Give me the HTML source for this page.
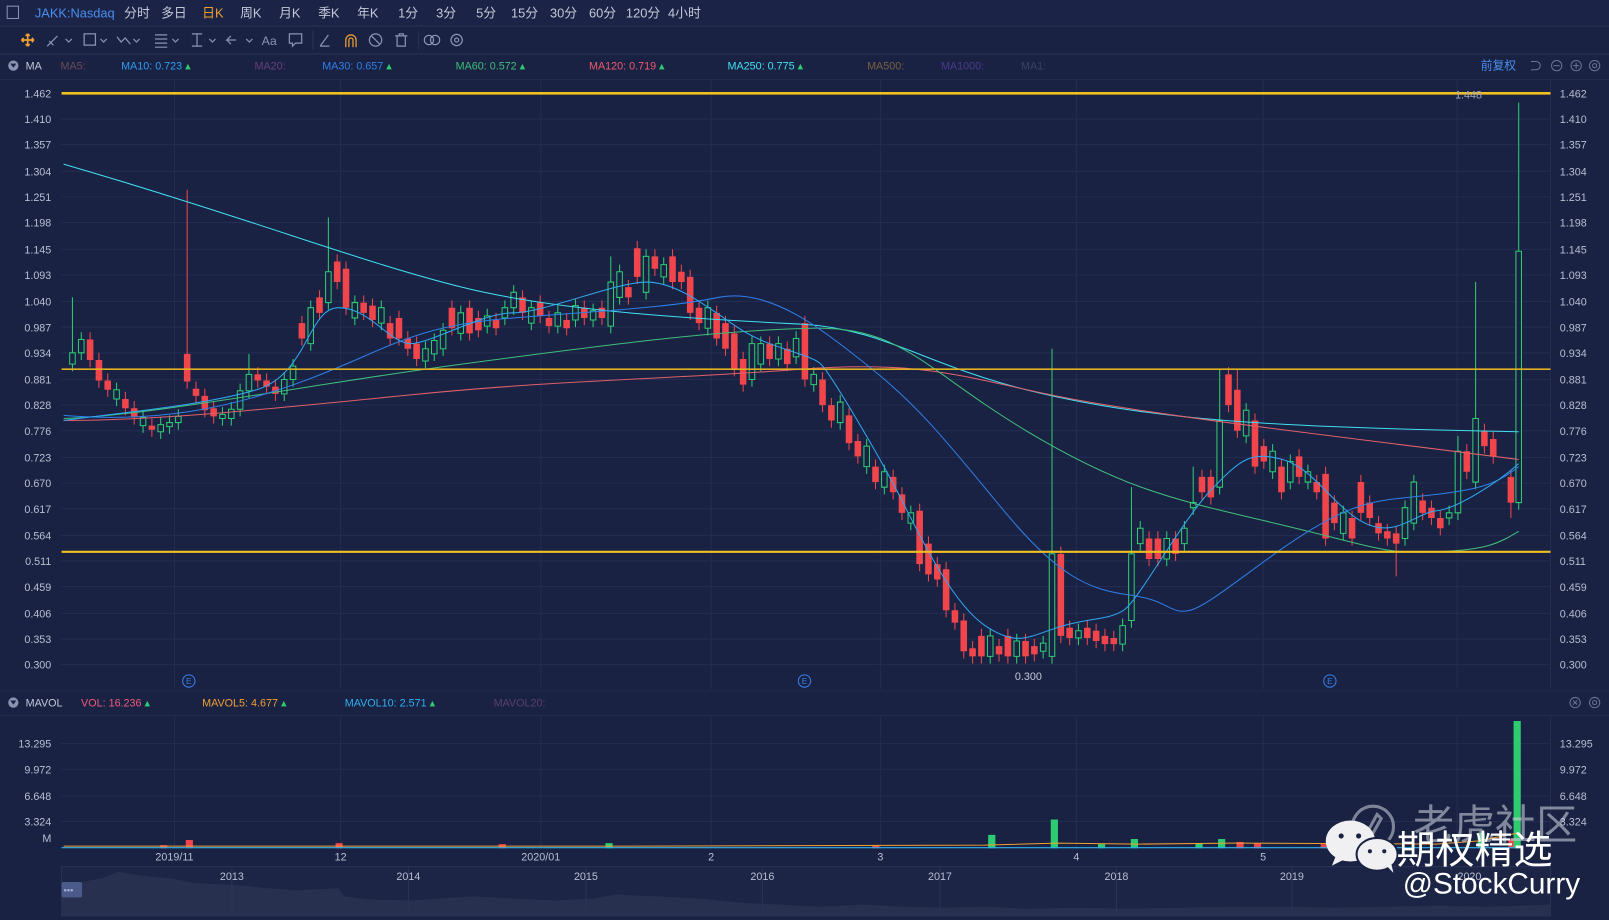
<!DOCTYPE html>
<html><head><meta charset="utf-8">
<style>
html,body{margin:0;padding:0;background:#1a2244;overflow:hidden}
svg{display:block}
text{font-family:"Liberation Sans","Noto Sans CJK SC",sans-serif}
</style></head>
<body>
<svg width="1609" height="920" viewBox="0 0 1568 897" preserveAspectRatio="none" xmlns="http://www.w3.org/2000/svg">
<rect width="1568" height="897" fill="#1a2244"/>
<rect x="0" y="0" width="1568" height="25" fill="#1b2346"/>
<line x1="0" y1="25.5" x2="1568" y2="25.5" stroke="#2a3458"/>
<line x1="0" y1="52.5" x2="1568" y2="52.5" stroke="#2a3458"/>
<rect x="7" y="6" width="11" height="12" fill="none" stroke="#8a94b0"/>
<g font-size="12.5" fill="#c3c9d9">
<text x="34" y="17" fill="#4a8ef0">JAKK:Nasdaq</text>
<text x="121" y="17">分时</text><text x="157" y="17">多日</text>
<text x="197" y="17" fill="#f0a030">日K</text><text x="234" y="17">周K</text>
<text x="272" y="17">月K</text><text x="310" y="17">季K</text><text x="348" y="17">年K</text>
<text x="388" y="17">1分</text><text x="425" y="17">3分</text><text x="464" y="17">5分</text>
<text x="498" y="17">15分</text><text x="536" y="17">30分</text><text x="574" y="17">60分</text>
<text x="610" y="17">120分</text><text x="651" y="17">4小时</text>
</g>
<g stroke="#8a94b0" fill="none" stroke-width="1.2">
<path d="M27 33v12M21 39h12M27 33l-2 2M27 33l2 2M27 45l-2-2M27 45l2-2M21 39l2-2M21 39l2 2M33 39l-2-2M33 39l-2 2" stroke="#f0a030" stroke-width="1.6"/>
<path d="M46 45l10-10M48 40l4 4"/><path d="M64 38l3 3 3-3"/>
<rect x="82" y="33" width="11" height="11"/><path d="M98 38l3 3 3-3"/>
<path d="M114 36l4 5 4-4 5 6"/><path d="M130 38l3 3 3-3"/>
<path d="M151 34h12M151 38h12M151 42h12M151 46h12"/><path d="M168 38l3 3 3-3"/>
<path d="M187 33h10M192 33v12M187 45h10"/><path d="M204 38l3 3 3-3"/>
<path d="M230 39h-9l4-4M221 39l4 4"/><path d="M240 38l3 3 3-3"/>
<path d="M282 33h12v9h-6l-3 3v-3h-3z"/>
<path d="M312 45l8-11M312 45h9"/>
<path d="M337 46v-7a5 5 0 0 1 10 0v7M340 46v-7a2 2 0 0 1 4 0v7" stroke="#f0a030"/>
<circle cx="366" cy="39" r="6"/><path d="M362 35l8 8"/>
<path d="M385 35h12M389 35v-2h4v2M387 35v10h8v-10"/>
<circle cx="418" cy="39" r="4.5"/><circle cx="424" cy="39" r="4.5"/>
<circle cx="445" cy="39" r="5.5"/><circle cx="445" cy="39" r="2"/>
</g>
<text x="255" y="44" font-size="12" fill="#8a94b0">Aa</text>
<line x1="305" y1="30" x2="305" y2="48" stroke="#2a3458"/>
<line x1="408" y1="30" x2="408" y2="48" stroke="#2a3458"/>
<circle cx="13" cy="64" r="5" fill="#8a94b0"/><path d="M10 62h6l-3 4z" fill="#1a2244"/>
<g font-size="10.5">
<text x="25" y="68" fill="#c3c9d9">MA</text>
<text x="59" y="68" fill="#6b4a5a">MA5:</text>
<text x="118" y="68" fill="#2f9cf0">MA10: 0.723 <tspan fill="#2ecc71">▴</tspan></text>
<text x="248" y="68" fill="#6a3f7a">MA20:</text>
<text x="314" y="68" fill="#2f7fe8">MA30: 0.657 <tspan fill="#2ecc71">▴</tspan></text>
<text x="444" y="68" fill="#3fbf7a">MA60: 0.572 <tspan fill="#2ecc71">▴</tspan></text>
<text x="574" y="68" fill="#f05a6a">MA120: 0.719 <tspan fill="#2ecc71">▴</tspan></text>
<text x="709" y="68" fill="#3fe0f0">MA250: 0.775 <tspan fill="#2ecc71">▴</tspan></text>
<text x="845" y="68" fill="#7a6040">MA500:</text>
<text x="917" y="68" fill="#4a3a8a">MA1000:</text>
<text x="995" y="68" fill="#3a4260">MA1:</text>
<text x="1443" y="68" fill="#4a8ef0" font-size="11.5">前复权</text>
</g>
<g stroke="#6a7490" fill="none" stroke-width="1">
<path d="M1492 60h5a4 4 0 0 1 0 8h-5"/>
<circle cx="1517" cy="64" r="5"/><path d="M1514 64h6"/>
<circle cx="1536" cy="64" r="5"/><path d="M1533 64h6M1536 61v6"/>
<circle cx="1554" cy="64" r="5"/><circle cx="1554" cy="64" r="2"/>
<circle cx="1535" cy="685" r="5"/><path d="M1533 683l4 4M1537 683l-4 4"/>
<circle cx="1554" cy="685" r="5"/><circle cx="1554" cy="685" r="2"/>
</g>
<g stroke="#232d52" stroke-width="1">
<path d="M60 91H1511M60 116H1511M60 141H1511M60 167H1511M60 192H1511M60 217H1511M60 243H1511M60 268H1511M60 294H1511M60 319H1511M60 344H1511M60 370H1511M60 395H1511M60 420H1511M60 446H1511M60 471H1511M60 496H1511M60 522H1511M60 547H1511M60 572H1511M60 598H1511M60 623H1511M60 648H1511"/>
<path d="M60 725H1511M60 750H1511M60 776H1511M60 801H1511"/>
<path d="M170 78V672M332 78V672M527 78V672M693 78V672M858 78V672M1049 78V672M1231 78V672M1420 78V672M1511 78V672"/>
<path d="M170 698V828M332 698V828M527 698V828M693 698V828M858 698V828M1049 698V828M1231 698V828M1420 698V828M1511 698V828"/>
</g>
<line x1="0" y1="77.5" x2="1568" y2="77.5" stroke="#222b4c"/>
<line x1="0" y1="673.5" x2="1568" y2="673.5" stroke="#222b4c"/>
<line x1="0" y1="697.5" x2="1568" y2="697.5" stroke="#222b4c"/>
<path fill="none" stroke="#f0454a" stroke-width="1" d="M87.8 324V358M96.4 344V378M105 364V387M122.2 382V405M130.8 391V414M148 408V426M182.4 185V379M191 372V393M199.6 379V407M208.2 391V413M251.2 358V378M259.8 364V384M268.4 370V391M294.2 308V337M311.4 283V312M328.6 248V282M337.2 255V307M354.4 288V312M363 291V319M380.2 308V337M388.8 303V337M397.4 323V347M406 328V357M440.4 293V327M457.6 293V332M466.2 303V329M483.4 305V327M509.2 283V312M526.4 288V315M535 303V325M552.2 305V327M569.4 293V317M586.6 293V317M612.4 273V297M621 235V277M638.2 243V269M655.4 243V282M664 258V282M672.6 263V312M681.2 293V322M698.4 298V337M707 308V347M715.6 318V367M724.2 343V382M750 328V357M767.2 333V362M784.4 308V377M801.6 363V402M810.2 388V417M827.4 398V439M836 423V452M853.2 448V477M870.4 458V487M879 475V507M896.2 491V557M904.8 523V567M913.4 543V572M922 548V602M930.6 588V614M939.2 598V642M947.8 625V647M956.4 613V647M973.6 623V645M982.2 613V647M999.4 618V647M1008 623V645M1033.8 533V627M1042.4 605V629M1059.6 605V629M1068.2 608V632M1076.8 613V635M1085.4 615V635M1119.8 518V552M1128.4 518V552M1145.6 518V547M1171.4 458V487M1180 458V492M1197.2 358V402M1205.8 360V427M1223 403V462M1231.6 428V457M1248.8 448V487M1266 438V472M1283.2 463V487M1291.8 455V532M1300.4 483V517M1317.6 498V532M1326.2 463V507M1334.8 483V512M1343.4 503V527M1352 511V532M1360.6 513V562M1386.4 481V507M1395 488V512M1403.6 498V522M1429.4 433V467M1446.6 413V442M1455.2 421V452M1472.4 458V505"/>
<path fill="#f0454a" d="M84.6 331h6.4v20h-6.4zM93.2 351h6.4v20h-6.4zM101.8 371h6.4v9h-6.4zM119 389h6.4v9h-6.4zM127.6 398h6.4v9h-6.4zM144.8 415h6.4v4h-6.4zM179.2 345h6.4v27h-6.4zM187.8 379h6.4v7h-6.4zM196.4 386h6.4v14h-6.4zM205 398h6.4v8h-6.4zM248 365h6.4v6h-6.4zM256.6 371h6.4v6h-6.4zM265.2 377h6.4v7h-6.4zM291 315h6.4v15h-6.4zM308.2 290h6.4v15h-6.4zM325.4 255h6.4v20h-6.4zM334 262h6.4v38h-6.4zM351.2 295h6.4v10h-6.4zM359.8 298h6.4v14h-6.4zM377 315h6.4v15h-6.4zM385.6 310h6.4v20h-6.4zM394.2 330h6.4v10h-6.4zM402.8 335h6.4v15h-6.4zM437.2 300h6.4v20h-6.4zM454.4 300h6.4v25h-6.4zM463 310h6.4v12h-6.4zM480.2 312h6.4v8h-6.4zM506 290h6.4v15h-6.4zM523.2 295h6.4v13h-6.4zM531.8 310h6.4v8h-6.4zM549 312h6.4v8h-6.4zM566.2 300h6.4v10h-6.4zM583.4 300h6.4v10h-6.4zM609.2 280h6.4v10h-6.4zM617.8 242h6.4v28h-6.4zM635 250h6.4v12h-6.4zM652.2 250h6.4v25h-6.4zM660.8 265h6.4v10h-6.4zM669.4 270h6.4v35h-6.4zM678 300h6.4v15h-6.4zM695.2 305h6.4v25h-6.4zM703.8 315h6.4v25h-6.4zM712.4 325h6.4v35h-6.4zM721 350h6.4v25h-6.4zM746.8 335h6.4v15h-6.4zM764 340h6.4v15h-6.4zM781.2 315h6.4v55h-6.4zM798.4 370h6.4v25h-6.4zM807 395h6.4v15h-6.4zM824.2 405h6.4v27h-6.4zM832.8 430h6.4v15h-6.4zM850 455h6.4v15h-6.4zM867.2 465h6.4v15h-6.4zM875.8 482h6.4v18h-6.4zM893 498h6.4v52h-6.4zM901.6 530h6.4v30h-6.4zM910.2 550h6.4v15h-6.4zM918.8 555h6.4v40h-6.4zM927.4 595h6.4v12h-6.4zM936 605h6.4v30h-6.4zM944.6 632h6.4v8h-6.4zM953.2 620h6.4v20h-6.4zM970.4 630h6.4v8h-6.4zM979 620h6.4v20h-6.4zM996.2 625h6.4v15h-6.4zM1004.8 630h6.4v8h-6.4zM1030.6 540h6.4v80h-6.4zM1039.2 612h6.4v10h-6.4zM1056.4 612h6.4v10h-6.4zM1065 615h6.4v10h-6.4zM1073.6 620h6.4v8h-6.4zM1082.2 622h6.4v6h-6.4zM1116.6 525h6.4v20h-6.4zM1125.2 525h6.4v20h-6.4zM1142.4 525h6.4v15h-6.4zM1168.2 465h6.4v15h-6.4zM1176.8 465h6.4v20h-6.4zM1194 365h6.4v30h-6.4zM1202.6 380h6.4v40h-6.4zM1219.8 410h6.4v45h-6.4zM1228.4 435h6.4v15h-6.4zM1245.6 455h6.4v25h-6.4zM1262.8 445h6.4v20h-6.4zM1280 470h6.4v10h-6.4zM1288.6 462h6.4v63h-6.4zM1297.2 490h6.4v20h-6.4zM1314.4 505h6.4v20h-6.4zM1323 470h6.4v30h-6.4zM1331.6 490h6.4v15h-6.4zM1340.2 510h6.4v10h-6.4zM1348.8 518h6.4v7h-6.4zM1357.4 520h6.4v10h-6.4zM1383.2 488h6.4v12h-6.4zM1391.8 495h6.4v10h-6.4zM1400.4 505h6.4v10h-6.4zM1426.2 440h6.4v20h-6.4zM1443.4 420h6.4v15h-6.4zM1452 428h6.4v17h-6.4zM1469.2 465h6.4v25h-6.4z"/>
<path fill="none" stroke="#2ecc71" stroke-width="1" d="M70.6 290V362M79.2 324V351M113.6 373V396M139.4 400V422M156.6 407V428M165.2 405V423M173.8 399V419M216.8 397V415M225.4 392V415M234 374V406M242.6 345V388M277 363V391M285.6 350V377M302.8 293V342M320 212V302M345.8 288V317M371.6 293V322M414.6 333V359M423.2 325V352M431.8 315V347M449 298V332M474.8 301V325M492 293V317M500.6 278V307M517.8 293V322M543.6 298V325M560.8 291V319M578 296V319M595.2 250V325M603.8 258V297M629.6 243V292M646.8 251V277M689.8 293V327M732.8 328V377M741.4 328V362M758.6 328V357M775.8 323V355M793 358V382M818.8 385V419M844.6 428V462M861.8 453V482M887.6 493V517M965 613V647M990.8 618V647M1016.6 620V642M1025.2 340V647M1051 608V629M1094 603V635M1102.6 475V612M1111.2 508V537M1137 518V552M1154.2 508V537M1162.8 455V502M1188.6 360V482M1214.4 393V432M1240.2 433V467M1257.4 443V477M1274.6 453V477M1309 493V527M1369.2 488V532M1377.8 463V517M1412.2 493V512M1420.8 425V507M1438 275V477M1480 100V497"/>
<path fill="#1a2244" stroke="#2ecc71" stroke-width="1" d="M67.9 344h5.4v11h-5.4zM76.5 331h5.4v13h-5.4zM110.9 380h5.4v9h-5.4zM136.7 407h5.4v8h-5.4zM153.9 414h5.4v7h-5.4zM162.5 412h5.4v4h-5.4zM171.1 406h5.4v6h-5.4zM214.1 404h5.4v4h-5.4zM222.7 399h5.4v9h-5.4zM231.3 381h5.4v18h-5.4zM239.9 365h5.4v16h-5.4zM274.3 370h5.4v14h-5.4zM282.9 357h5.4v13h-5.4zM300.1 300h5.4v35h-5.4zM317.3 265h5.4v30h-5.4zM343.1 295h5.4v15h-5.4zM368.9 300h5.4v15h-5.4zM411.9 340h5.4v12h-5.4zM420.5 332h5.4v13h-5.4zM429.1 322h5.4v18h-5.4zM446.3 305h5.4v20h-5.4zM472.1 308h5.4v10h-5.4zM489.3 300h5.4v10h-5.4zM497.9 285h5.4v15h-5.4zM515.1 300h5.4v15h-5.4zM540.9 305h5.4v13h-5.4zM558.1 298h5.4v14h-5.4zM575.3 303h5.4v9h-5.4zM592.5 275h5.4v43h-5.4zM601.1 265h5.4v25h-5.4zM626.9 250h5.4v35h-5.4zM644.1 258h5.4v12h-5.4zM687.1 300h5.4v20h-5.4zM730.1 335h5.4v35h-5.4zM738.7 335h5.4v20h-5.4zM755.9 335h5.4v15h-5.4zM773.1 330h5.4v18h-5.4zM790.3 365h5.4v10h-5.4zM816.1 392h5.4v20h-5.4zM841.9 435h5.4v20h-5.4zM859.1 460h5.4v15h-5.4zM884.9 500h5.4v10h-5.4zM962.3 620h5.4v20h-5.4zM988.1 625h5.4v15h-5.4zM1013.9 627h5.4v8h-5.4zM1022.5 540h5.4v100h-5.4zM1048.3 615h5.4v7h-5.4zM1091.3 610h5.4v18h-5.4zM1099.9 540h5.4v65h-5.4zM1108.5 515h5.4v15h-5.4zM1134.3 525h5.4v20h-5.4zM1151.5 515h5.4v15h-5.4zM1160.1 490h5.4v5h-5.4zM1185.9 410h5.4v65h-5.4zM1211.7 400h5.4v25h-5.4zM1237.5 440h5.4v20h-5.4zM1254.7 450h5.4v20h-5.4zM1271.9 460h5.4v10h-5.4zM1306.3 500h5.4v20h-5.4zM1366.5 495h5.4v30h-5.4zM1375.1 470h5.4v40h-5.4zM1409.5 500h5.4v5h-5.4zM1418.1 440h5.4v60h-5.4zM1435.3 408h5.4v62h-5.4zM1477.3 245h5.4v245h-5.4z"/>
<g fill="none" stroke-width="1" stroke-linejoin="round">
<path stroke="#3fe0f0" d="M62 160 C250 215 350 255 450 280 S700 312 780 316 S900 355 1000 380 S1200 412 1300 416 S1450 420 1480 421"/>
<path stroke="#e0606a" d="M62 410 C150 410 250 400 400 385 S650 370 780 360 S950 372 1050 390 S1300 425 1480 448"/>
<path stroke="#3fbf7a" d="M62 408 C150 405 300 375 450 355 S700 322 790 320 S900 360 1000 420 S1150 488 1250 512 S1350 540 1400 538 S1460 530 1480 518"/>
<path stroke="#2f7fe8" d="M62 405 C150 412 220 400 300 370 S400 318 500 310 S650 300 700 290 S800 320 850 360 S930 440 980 500 S1060 575 1100 580 S1140 600 1160 595 S1230 545 1280 515 S1350 488 1400 482 S1460 470 1480 455"/>
<path stroke="#2fa8f0" d="M62 410 C120 402 200 395 250 380 S300 300 330 300 S380 335 400 335 S470 305 500 305 S600 275 630 275 S690 300 720 320 S790 345 800 355 S860 450 880 490 S930 590 960 610 S1000 622 1030 612 S1080 605 1095 595 S1150 510 1180 478 S1220 440 1250 448 S1300 495 1330 510 S1380 500 1400 498 S1460 470 1480 452"/>
</g>
<line x1="60" y1="91" x2="1511" y2="91" stroke="#f0c020" stroke-width="2.5"/>
<line x1="60" y1="360" x2="1511" y2="360" stroke="#e0b020" stroke-width="1.6"/>
<line x1="60" y1="538" x2="1511" y2="538" stroke="#f0c020" stroke-width="2"/>
<text x="1418" y="96" font-size="10.5" fill="#a0a8c0">1.448</text>
<text x="989" y="663" font-size="10.5" fill="#c3c9d9">0.300</text>
<g fill="none" stroke="#3a7ee8"><circle cx="184" cy="664" r="6"/><circle cx="784" cy="664" r="6"/><circle cx="1296" cy="664" r="6"/></g>
<g font-size="8" fill="#3a7ee8" text-anchor="middle"><text x="184" y="667">E</text><text x="784" y="667">E</text><text x="1296" y="667">E</text></g>
<g font-size="10.5" fill="#b8bfd2">
<g text-anchor="end">
<text x="50" y="95">1.462</text><text x="50" y="120">1.410</text><text x="50" y="145">1.357</text><text x="50" y="171">1.304</text><text x="50" y="196">1.251</text><text x="50" y="221">1.198</text><text x="50" y="247">1.145</text><text x="50" y="272">1.093</text><text x="50" y="298">1.040</text><text x="50" y="323">0.987</text><text x="50" y="348">0.934</text><text x="50" y="374">0.881</text><text x="50" y="399">0.828</text><text x="50" y="424">0.776</text><text x="50" y="450">0.723</text><text x="50" y="475">0.670</text><text x="50" y="500">0.617</text><text x="50" y="526">0.564</text><text x="50" y="551">0.511</text><text x="50" y="576">0.459</text><text x="50" y="602">0.406</text><text x="50" y="627">0.353</text><text x="50" y="652">0.300</text>
<text x="50" y="729">13.295</text><text x="50" y="754">9.972</text><text x="50" y="780">6.648</text><text x="50" y="805">3.324</text><text x="50" y="821">M</text>
</g>
<text x="1520" y="95">1.462</text><text x="1520" y="120">1.410</text><text x="1520" y="145">1.357</text><text x="1520" y="171">1.304</text><text x="1520" y="196">1.251</text><text x="1520" y="221">1.198</text><text x="1520" y="247">1.145</text><text x="1520" y="272">1.093</text><text x="1520" y="298">1.040</text><text x="1520" y="323">0.987</text><text x="1520" y="348">0.934</text><text x="1520" y="374">0.881</text><text x="1520" y="399">0.828</text><text x="1520" y="424">0.776</text><text x="1520" y="450">0.723</text><text x="1520" y="475">0.670</text><text x="1520" y="500">0.617</text><text x="1520" y="526">0.564</text><text x="1520" y="551">0.511</text><text x="1520" y="576">0.459</text><text x="1520" y="602">0.406</text><text x="1520" y="627">0.353</text><text x="1520" y="652">0.300</text>
<text x="1520" y="729">13.295</text><text x="1520" y="754">9.972</text><text x="1520" y="780">6.648</text><text x="1520" y="805">3.324</text>
<g text-anchor="middle">
<text x="170" y="839">2019/11</text><text x="332" y="839">12</text><text x="527" y="839">2020/01</text><text x="693" y="839">2</text><text x="858" y="839">3</text><text x="1049" y="839">4</text><text x="1231" y="839">5</text>
</g>
</g>
<circle cx="13" cy="685" r="5" fill="#8a94b0"/><path d="M10 683h6l-3 4z" fill="#1a2244"/>
<g font-size="10.5">
<text x="25" y="689" fill="#c3c9d9">MAVOL</text>
<text x="79" y="689" fill="#f05a7a">VOL: 16.236 <tspan fill="#2ecc71">▴</tspan></text>
<text x="197" y="689" fill="#f0a030">MAVOL5: 4.677 <tspan fill="#2ecc71">▴</tspan></text>
<text x="336" y="689" fill="#2fb0f0">MAVOL10: 2.571 <tspan fill="#2ecc71">▴</tspan></text>
<text x="481" y="689" fill="#5a3f6a">MAVOL20:</text>
</g>
<path fill="#f0454a" d="M181 819h7v8h-7zM327 822h7v5h-7zM486 823h7v4h-7zM1205 821h7v6h-7zM1222 822h7v5h-7zM1287 823h7v4h-7zM1470 818h7v9h-7zM156 824h7v3h-7zM850 824h7v3h-7z"/>
<path fill="#2ecc71" d="M963 814h7v13h-7zM1024 799h7v28h-7zM1102 818h7v9h-7zM1187 818h7v9h-7zM1165 822h7v5h-7zM1440 812h7v15h-7zM1475 703h7v124h-7zM590 822h7v5h-7zM1070 823h7v4h-7z"/>
<polyline fill="none" stroke="#f0a030" stroke-width="1" points="62,825 300,825 600,825 960,824 1030,822 1110,823 1200,822 1400,823 1440,820 1480,812"/>
<line x1="60" y1="826.5" x2="1480" y2="826.5" stroke="#2fb0f0" stroke-width="1"/>
<rect x="60" y="845" width="1451" height="48" fill="#1c2546" stroke="#2a3458"/>
<path d="M60 865 L80 860 L100 856 L115 850 L140 854 L170 857 L190 861 L230 863 L260 866 L290 868 L330 866 L335 874 L360 877 L400 878 L430 876 L460 874 L500 876 L540 878 L580 876 L600 872 L640 874 L680 876 L720 880 L760 882 L800 884 L840 882 L880 884 L920 885 L960 884 L1000 886 L1050 885 L1100 886 L1150 885 L1200 884 L1260 884 L1300 885 L1350 884 L1400 883 L1450 884 L1511 882 L1511 893 L60 893Z" fill="#27304f"/>
<g stroke="#2a3458"><path d="M226 846V892M398 846V892M571 846V892M743 846V892M916 846V892M1088 846V892M1259 846V892"/></g>
<rect x="60" y="860" width="20" height="15" rx="2" fill="#4a5a8a"/>
<text x="62" y="871" font-size="9" fill="#a8b4d8">•••</text>
<g font-size="10.5" fill="#b8bfd2" text-anchor="middle">
<text x="226" y="858">2013</text><text x="398" y="858">2014</text><text x="571" y="858">2015</text><text x="743" y="858">2016</text><text x="916" y="858">2017</text><text x="1088" y="858">2018</text><text x="1259" y="858">2019</text><text x="1432" y="858">2020</text>
</g>
<g opacity="0.55" fill="none" stroke="#d0d4de" stroke-width="3"><circle cx="1338" cy="806" r="20"/><path d="M1330 816l12-22 4 4-10 18z"/></g>
<text x="1377" y="818" font-size="40" fill="#c8ccd6" opacity="0.6">老虎社区</text>
<g fill="#f0f0f2"><ellipse cx="1316" cy="820" rx="24" ry="20"/><path d="M1302 834l-4 10 12-6z"/><ellipse cx="1342" cy="833" rx="20" ry="16" stroke="#1a2244" stroke-width="2"/><path d="M1352 845l6 6-2-8z"/></g>
<g fill="#1a2244"><circle cx="1307" cy="815" r="2.5"/><circle cx="1324" cy="815" r="2.5"/><circle cx="1335" cy="830" r="2"/><circle cx="1349" cy="830" r="2"/></g>
<text x="1361" y="842" font-size="38" fill="#ffffff">期权精选</text>
<text x="1367" y="871" font-size="29" fill="#ffffff">@StockCurry</text>
</svg>
</body></html>
